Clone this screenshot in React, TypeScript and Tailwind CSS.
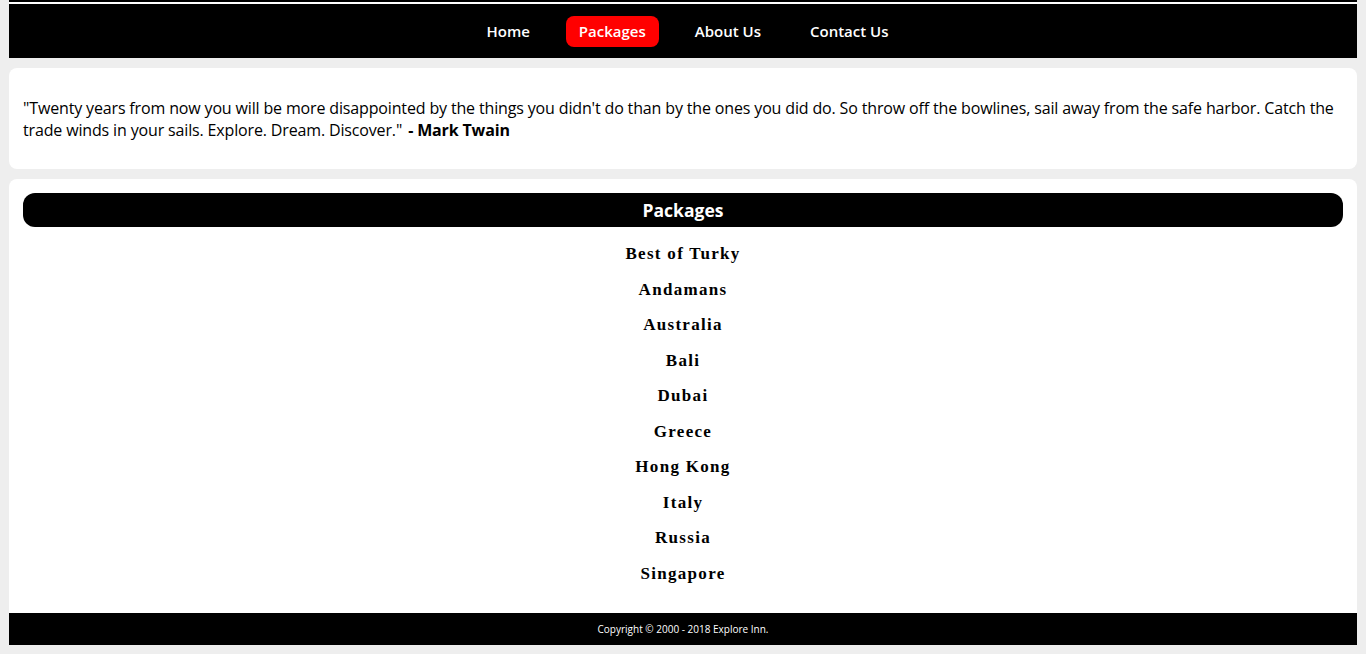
import React from "react";

const NAV = ["Home", "Packages", "About Us", "Contact Us"];

const PACKAGES = [
  "Best of Turky",
  "Andamans",
  "Australia",
  "Bali",
  "Dubai",
  "Greece",
  "Hong Kong",
  "Italy",
  "Russia",
  "Singapore",
];

const comic = "font-['Comic_Sans_MS','Open_Sans','Liberation_Sans',sans-serif]";

export default function App() {
  return (
    <div className={`min-h-[654px] bg-[#eeeeee] px-[9px] pb-[9px] ${comic}`}>
      {/* Header */}
      <header className="bg-black pt-[2px]">
        <div className="h-[2px] bg-white" />
        <nav className="h-[54px] flex items-center justify-center gap-[23px] pl-[9px]">
          {NAV.map((item) => (
            <a
              key={item}
              href="#"
              className={`px-[13px] h-[31px] flex items-center rounded-[8px] text-white text-[15px] font-semibold ${
                item === "Packages" ? "bg-[#ff0000]" : ""
              }`}
            >
              {item}
            </a>
          ))}
        </nav>
      </header>

      {/* Quote */}
      <section className="mt-[10px] bg-white rounded-[8px] px-[14px] pt-[29px] pb-[28px]">
        <p className="text-[16px] leading-[22px] text-black tracking-[-0.15px]">
          "Twenty years from now you will be more disappointed by the things you didn't do than by the ones you did do. So throw off the bowlines, sail away from the safe harbor. Catch the trade winds in your sails. Explore. Dream. Discover."{" "}
          <b className="ml-[2px]">- Mark Twain</b>
        </p>
      </section>

      {/* Packages */}
      <section className="mt-[10px] bg-white rounded-t-[8px] px-[14px] pt-[14px] pb-[22px]">
        <h2 className="h-[34px] bg-black rounded-[12px] flex items-center justify-center text-white text-[17.5px] font-bold">
          Packages
        </h2>
        <ul className="mt-[9px] flex flex-col items-center">
          {PACKAGES.map((p) => (
            <li
              key={p}
              className="h-[35.5px] flex items-center font-['Liberation_Serif',serif] font-bold text-[17px] tracking-[1.3px] text-black"
            >
              {p}
            </li>
          ))}
        </ul>
      </section>

      {/* Footer */}
      <footer className="h-[32px] bg-black flex items-center justify-center text-white text-[10px]">
        Copyright © 2000 - 2018 Explore Inn.
      </footer>
    </div>
  );
}
